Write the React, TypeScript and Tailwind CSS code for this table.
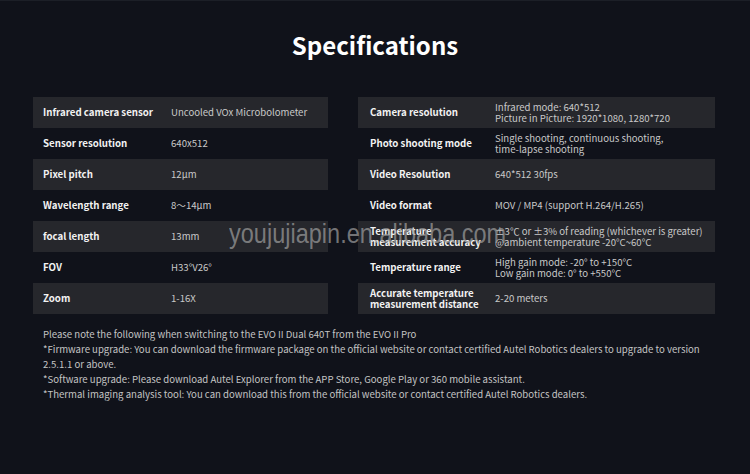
import React from "react";

type Row = { label: React.ReactNode; value: React.ReactNode };

const left: Row[] = [
  { label: "Infrared camera sensor", value: "Uncooled VOx Microbolometer" },
  { label: "Sensor resolution", value: "640x512" },
  { label: "Pixel pitch", value: "12μm" },
  { label: "Wavelength range", value: "8～14μm" },
  { label: "focal length", value: "13mm" },
  { label: "FOV", value: "H33°V26°" },
  { label: "Zoom", value: "1-16X" },
];

const right: Row[] = [
  {
    label: "Camera resolution",
    value: (
      <>
        Infrared mode: 640*512
        <br />
        Picture in Picture: 1920*1080, 1280*720
      </>
    ),
  },
  {
    label: "Photo shooting mode",
    value: (
      <>
        Single shooting, continuous shooting,
        <br />
        time-lapse shooting
      </>
    ),
  },
  { label: "Video Resolution", value: "640*512 30fps" },
  { label: "Video format", value: "MOV / MP4 (support H.264/H.265)" },
  {
    label: (
      <>
        Temperature
        <br />
        measurement accuracy
      </>
    ),
    value: (
      <>
        ±3℃ or ±3% of reading (whichever is greater)
        <br />
        @ambient temperature -20°C~60°C
      </>
    ),
  },
  {
    label: "Temperature range",
    value: (
      <>
        High gain mode: -20° to +150°C
        <br />
        Low gain mode: 0° to +550°C
      </>
    ),
  },
  {
    label: (
      <>
        Accurate temperature
        <br />
        measurement distance
      </>
    ),
    value: "2-20 meters",
  },
];

function Table({ rows, labelW, pad }: { rows: Row[]; labelW: string; pad: string }) {
  return (
    <div className="flex flex-col">
      {rows.map((r, i) => (
        <div
          key={i}
          className={`flex h-[31px] items-center ${i % 2 === 0 ? "bg-[#26272c]" : ""}`}
        >
          <div className={`${labelW} ${pad} shrink-0 text-[9.7px] font-bold leading-[11px] text-[#f2f2f2]`}>
            {r.label}
          </div>
          <div className="text-[9.6px] leading-[11px] text-[#c9c9c9]">{r.value}</div>
        </div>
      ))}
    </div>
  );
}

export default function App() {
  return (
    <div
      className="relative h-[474px] w-[750px] overflow-hidden border-t border-[#1c1f27] bg-[#10121a]"
      style={{ fontFamily: '"Noto Sans CJK SC", "Noto Sans", sans-serif' }}
    >
      <h1 className="pt-[26px] text-center text-[24px] font-bold leading-[36px] text-white">
        Specifications
      </h1>
      <div className="mt-[34px] grid grid-cols-[295px_357px] gap-x-[30px] pl-[33px]">
        <Table rows={left} labelW="w-[138px]" pad="pl-[10px]" />
        <Table rows={right} labelW="w-[137px]" pad="pl-[12px]" />
      </div>
      <div className="mt-[13px] pl-[43px] pr-[30px] text-[9.6px] leading-[15px] text-[#c4c4c4]">
        <p>Please note the following when switching to the EVO II Dual 640T from the EVO II Pro</p>
        <p>
          *Firmware upgrade: You can download the firmware package on the official website or contact certified Autel Robotics dealers to upgrade to version 2.5.1.1 or above.
        </p>
        <p>*Software upgrade: Please download Autel Explorer from the APP Store, Google Play or 360 mobile assistant.</p>
        <p>*Thermal imaging analysis tool: You can download this from the official website or contact certified Autel Robotics dealers.</p>
      </div>
      <div
        className="pointer-events-none absolute left-[229px] top-[216px] origin-left whitespace-nowrap text-[28px] leading-[34px] text-[#a0a0a0]/70"
        style={{ fontFamily: '"Liberation Sans", Arial, sans-serif', transform: "scaleX(0.84)" }}
      >
        youjujiapin.en.alibaba.com
      </div>
    </div>
  );
}
